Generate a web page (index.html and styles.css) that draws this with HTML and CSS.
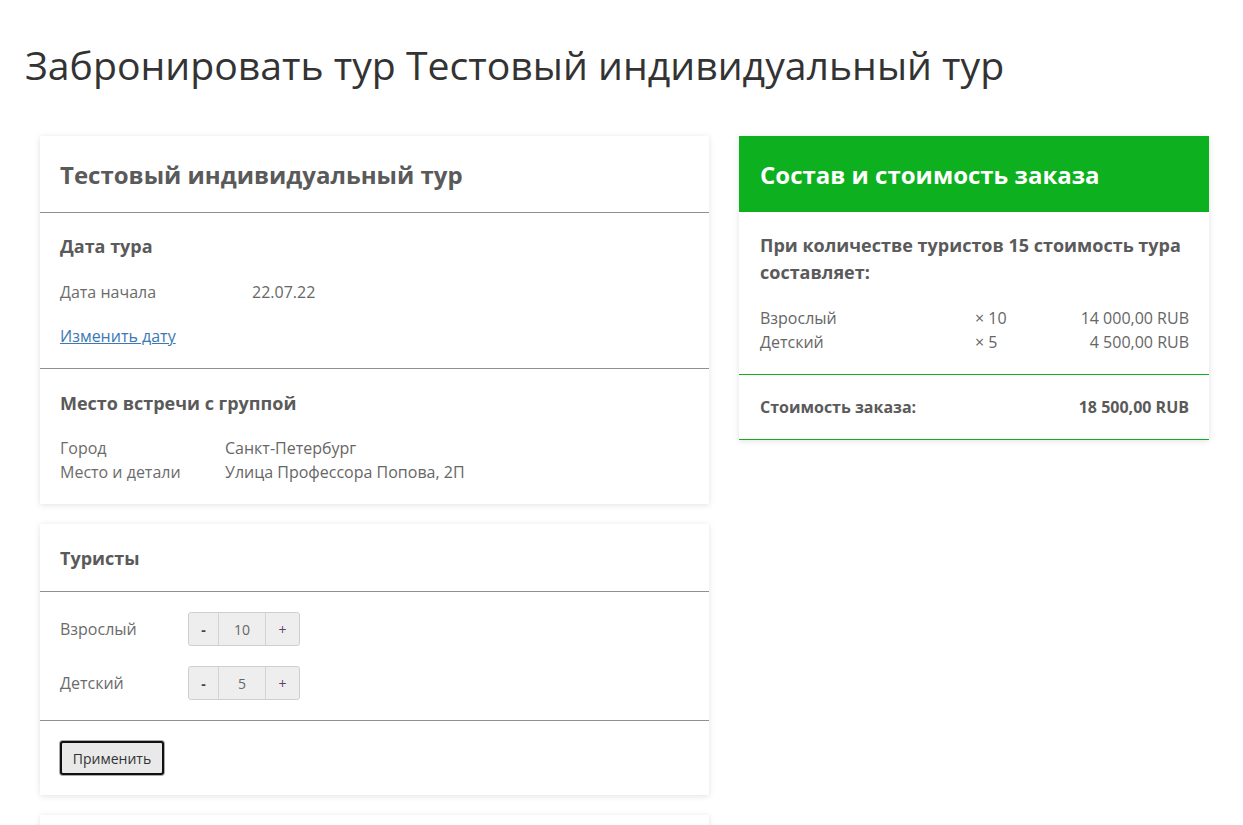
FILE: index.html
```html
<!DOCTYPE html>
<html lang="ru">
<head>
<meta charset="utf-8">
<title>Забронировать тур</title>
<link rel="stylesheet" href="styles.css">
</head>
<body>
<div class="page">
  <h1 class="page-title">Забронировать тур Тестовый индивидуальный тур</h1>
  <div class="layout">
    <div class="col-left">
      <section class="card">
        <div class="card-head"><h2 class="card-title">Тестовый индивидуальный тур</h2></div>
        <div class="card-section">
          <h3 class="section-title">Дата тура</h3>
          <div class="kv kv-date"><span class="k">Дата начала</span><span class="v">22.07.22</span></div>
          <a class="link" href="#">Изменить дату</a>
        </div>
        <div class="card-section last">
          <h3 class="section-title">Место встречи с группой</h3>
          <div class="kv-list">
            <div class="kv kv-place"><span class="k">Город</span><span class="v">Санкт-Петербург</span></div>
            <div class="kv kv-place"><span class="k">Место и детали</span><span class="v">Улица Профессора Попова, 2П</span></div>
          </div>
        </div>
      </section>

      <section class="card">
        <div class="card-head small"><h3 class="section-title">Туристы</h3></div>
        <div class="tourists">
          <div class="tourist-row">
            <span class="k">Взрослый</span>
            <div class="counter"><button class="cbtn minus">-</button><span class="cval">10</span><button class="cbtn plus">+</button></div>
          </div>
          <div class="tourist-row">
            <span class="k">Детский</span>
            <div class="counter"><button class="cbtn minus">-</button><span class="cval">5</span><button class="cbtn plus">+</button></div>
          </div>
        </div>
        <div class="card-foot"><button class="apply">Применить</button></div>
      </section>

      <section class="card stub"></section>
    </div>

    <aside class="col-right">
      <section class="card order">
        <div class="order-head"><h2 class="order-title">Состав и стоимость заказа</h2></div>
        <div class="order-body">
          <p class="order-note">При количестве туристов 15 стоимость тура составляет:</p>
          <div class="order-lines">
            <div class="order-line"><span class="ol-name">Взрослый</span><span class="ol-qty">× 10</span><span class="ol-sum">14 000,00 RUB</span></div>
            <div class="order-line"><span class="ol-name">Детский</span><span class="ol-qty">× 5</span><span class="ol-sum">4 500,00 RUB</span></div>
          </div>
        </div>
        <div class="order-total"><span>Стоимость заказа:</span><span>18 500,00 RUB</span></div>
      </section>
    </aside>
  </div>
</div>
</body>
</html>
```

FILE: styles.css
```css
* { box-sizing: border-box; }
html, body { margin: 0; padding: 0; background: #fff; }
body {
  font-family: "Open Sans", "Liberation Sans", sans-serif;
  color: #666;
  font-size: 16px;
}
.page { padding: 0 24px; }
.page-title {
  margin: 0;
  padding-top: 38px;
  height: 136px;
  font-size: 39.2px;
  font-weight: 400;
  color: #333;
  line-height: 54px;
  padding-left: 1px;
}
.layout {
  display: flex;
  gap: 30px;
  padding-left: 16px;
  align-items: flex-start;
}
.col-left { width: 669px; display: flex; flex-direction: column; gap: 20px; }
.col-right { width: 470px; }
.card {
  background: #fff;
  box-shadow: 0 1px 6px rgba(0,0,0,0.12);
}
.card-head {
  height: 77px;
  padding: 0 20px;
  display: flex;
  align-items: center;
  border-bottom: 1px solid #8f8f8f;
}
.card-head.small { height: 68px; }
.card-title {
  margin: 0;
  font-size: 24px;
  font-weight: 700;
  color: #5a5a5a;
}
.section-title {
  margin: 0;
  font-size: 18px;
  font-weight: 700;
  color: #5a5a5a;
  line-height: 24px;
}
.card-section {
  padding: 21px 20px 20px;
  border-bottom: 1px solid #8f8f8f;
}
.card-section.last { border-bottom: 0; padding-top: 22px; padding-bottom: 20px; }
.kv { display: flex; line-height: 24px; }
.kv-date { margin-top: 22px; }
.kv-date .k { width: 192px; }
.kv-place .k { width: 165px; }
.kv-list { margin-top: 21px; }
.k { color: #6b6b6b; }
.v { color: #666; }
.link {
  display: inline-block;
  margin-top: 20px;
  color: #3c78b4;
  text-decoration: underline;
  line-height: 24px;
  vertical-align: top;
}
.tourists {
  padding: 20px;
  display: flex;
  flex-direction: column;
  gap: 20px;
  border-bottom: 1px solid #8f8f8f;
}
.tourist-row { display: flex; align-items: center; }
.tourist-row .k { width: 128px; }
.counter {
  display: flex;
  height: 34px;
  border: 1px solid #cfcfcf;
  border-radius: 3px;
  background: #eee;
}
.cbtn {
  width: 29px;
  border: 0;
  background: transparent;
  font-family: "Open Sans", sans-serif;
  font-size: 14px;
  color: #444;
  padding: 0;
}
.cbtn.minus { font-weight: 700; }
.cbtn.plus { width: 33px; color: #6a3b6a; }
.cval {
  width: 48px;
  display: flex;
  align-items: center;
  justify-content: center;
  font-size: 14px;
  color: #666;
  border-left: 1px solid #d2d2d2;
  border-right: 1px solid #d2d2d2;
}
.card-foot { padding: 20px; }
.apply {
  display: block;
  height: 34px;
  width: 104px;
  padding: 0;
  font-family: "Open Sans", sans-serif;
  font-size: 14px;
  color: #333;
  background: #e9e9e9;
  border: 2px solid #111;
  border-radius: 3px;
  box-shadow: 0 0 0 1px #aaa;
}
.stub { height: 40px; }
.order-head {
  background: #0db01e;
  height: 76px;
  padding: 0 21px;
  display: flex;
  align-items: center;
}
.order-title {
  margin: 0;
  font-size: 24px;
  font-weight: 700;
  color: #fff;
}
.order-body {
  padding: 20px 20px 20px 21px;
  border-bottom: 1px solid #0db01e;
}
.order-note {
  margin: 0;
  font-size: 18px;
  font-weight: 700;
  color: #5a5a5a;
  line-height: 27px;
}
.order-lines { margin-top: 20px; }
.order-line { display: flex; line-height: 24px; }
.ol-name { width: 215px; }
.ol-qty { width: 80px; }
.ol-sum { flex: 1; text-align: right; }
.order-total {
  display: flex;
  justify-content: space-between;
  padding: 0 20px 0 21px;
  height: 65px;
  align-items: center;
  font-weight: 700;
  color: #5a5a5a;
  border-bottom: 1px solid #0db01e;
}
```
